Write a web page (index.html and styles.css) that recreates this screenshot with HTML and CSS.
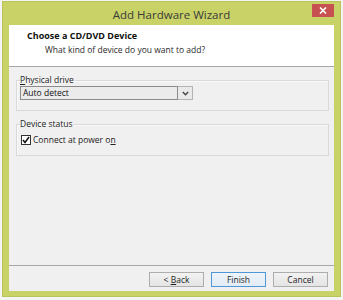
FILE: index.html
```html
<!DOCTYPE html>
<html lang="en">
<head>
  <meta charset="UTF-8" />
  <title>Add Hardware Wizard</title>
  <link rel="stylesheet" href="styles.css">
</head>
<body>
  <div class="window">
    <div class="titlebar">
      <span></span>
      <span class="title">Add Hardware Wizard</span>
      <span class="close">
        <svg width="8" height="7" viewBox="0 0 8 7"><path d="M1 0.5 L7 6.5 M7 0.5 L1 6.5" stroke="#fff" stroke-width="1.6"/></svg>
      </span>
    </div>

    <div class="client">
      <div class="header">
        <div class="header-title">Choose a CD/DVD Device</div>
        <div class="header-sub">What kind of device do you want to add?</div>
      </div>

      <div class="content">
        <fieldset class="group">
          <legend><u>P</u>hysical drive</legend>
          <div class="combo">
            <span class="combo-field">Auto detect</span>
            <span class="combo-arrow">
              <svg width="7" height="5" viewBox="0 0 7 5"><path d="M0.8 1 L3.5 3.8 L6.2 1" fill="none" stroke="#444" stroke-width="1.4"/></svg>
            </span>
          </div>
        </fieldset>

        <fieldset class="group status">
          <legend>Device status</legend>
          <label class="check-row">
            <span class="checkbox">
              <svg width="8" height="8" viewBox="0 0 8 8"><path d="M1 4 L3 6.5 L7 1" fill="none" stroke="#111" stroke-width="1.5"/></svg>
            </span>
            <span>Connect at power o<u>n</u></span>
          </label>
        </fieldset>
      </div>

      <div class="footer">
        <button class="btn">&lt; <u>B</u>ack</button>
        <button class="btn default">Finish</button>
        <button class="btn">Cancel</button>
      </div>
    </div>
  </div>
</body>
</html>
```

FILE: styles.css
```css
* {
  margin: 0;
  padding: 0;
  box-sizing: border-box;
}

body {
  background: #f4f4f4;
  font-family: 'Open Sans', 'Noto Sans', sans-serif;
  font-size: 8.5px;
  color: #1e1e1e;
}

.window {
  margin: 1px 2px 0 2px;
  height: 296px;
  border: 1px solid #b9c45a;
  background: #c8d266;
  padding: 0 6px 5px 6px;
  display: flex;
  flex-direction: column;
}

.titlebar {
  height: 23px;
  display: grid;
  grid-template-columns: 1fr auto 1fr;
}

.title {
  font-size: 11.5px;
  color: #3a3a3a;
  line-height: 23px;
  padding-top: 1px;
}

.close {
  justify-self: end;
  align-self: start;
  margin-top: 2px;
  width: 22px;
  height: 13px;
  background: #c75150;
  display: flex;
  align-items: center;
  justify-content: center;
}

.client {
  flex: 1;
  background: #f0f0f0;
  display: flex;
  flex-direction: column;
}

.header {
  background: #fff;
  height: 42px;
  border-bottom: 1px solid #a8a8a8;
  padding: 5px 0 0 18px;
}

.header-title {
  font-weight: bold;
  font-size: 9px;
  line-height: 12px;
  color: #111;
}

.header-sub {
  padding-left: 18px;
  margin-top: 2px;
  line-height: 12px;
  color: #2a2a2a;
}

.content {
  flex: 1;
  padding: 7px 5px 0 7px;
}

.group {
  border: 1px solid #d9d9d9;
  box-shadow: inset 1px 1px 0 #fafafa;
  padding: 0 3px 10px 3px;
  margin-bottom: 7px;
}

.group.status {
  padding-bottom: 9px;
}

.group legend {
  line-height: 12px;
  padding: 0 1px 0 0;
  color: #222;
}

.combo {
  width: 173px;
  height: 14px;
  display: flex;
  border: 1px solid #b4b4b4;
  background: #e9e9e9;
}

.combo-field {
  flex: 1;
  border: 1px solid #8c8c8c;
  margin: -1px 0 -1px -1px;
  background: #ebebeb;
  line-height: 12px;
  padding-left: 2px;
  color: #111;
}

.combo-arrow {
  width: 14px;
  display: flex;
  align-items: center;
  justify-content: center;
}

.check-row {
  margin-top: 4px;
  display: flex;
  align-items: center;
  gap: 2px;
  line-height: 12px;
  color: #222;
}

.checkbox {
  width: 10px;
  height: 10px;
  border: 1px solid #333;
  background: #fff;
  margin-left: 1px;
  display: flex;
  align-items: center;
  justify-content: center;
}

.footer {
  border-top: 1px solid #a8a8a8;
  height: 26px;
  padding: 6px 6px 0 0;
  display: flex;
  justify-content: flex-end;
  align-items: flex-start;
  gap: 7px;
}

.btn {
  width: 55px;
  height: 15px;
  font-family: inherit;
  font-size: 8.5px;
  color: #1e1e1e;
  border: 1px solid #adadad;
  background: linear-gradient(#f2f2f2, #e4e4e4);
}

.btn.default {
  border-color: #4f97d6;
  background: linear-gradient(#eef4fa, #e2ecf5);
}
```
